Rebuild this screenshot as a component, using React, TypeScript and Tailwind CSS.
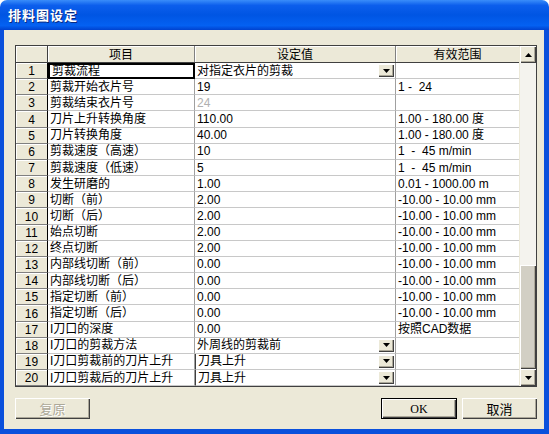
import React from 'react';

type Row = {
  name: string;
  value: string;
  range: string;
  drop?: boolean;
  dim?: boolean;
};

const rows: Row[] = [
  { name: '剪裁流程', value: '对指定衣片的剪裁', range: '', drop: true },
  { name: '剪裁开始衣片号', value: '19', range: '1 -  24' },
  { name: '剪裁结束衣片号', value: '24', range: '', dim: true },
  { name: '刀片上升转换角度', value: '110.00', range: '1.00 - 180.00 度' },
  { name: '刀片转换角度', value: '40.00', range: '1.00 - 180.00 度' },
  { name: '剪裁速度（高速）', value: '10', range: '1  -  45 m/min' },
  { name: '剪裁速度（低速）', value: '5', range: '1  -  45 m/min' },
  { name: '发生研磨的', value: '1.00', range: '0.01 - 1000.00 m' },
  { name: '切断（前）', value: '2.00', range: '-10.00 - 10.00 mm' },
  { name: '切断（后）', value: '2.00', range: '-10.00 - 10.00 mm' },
  { name: '始点切断', value: '2.00', range: '-10.00 - 10.00 mm' },
  { name: '终点切断', value: '2.00', range: '-10.00 - 10.00 mm' },
  { name: '内部线切断（前）', value: '0.00', range: '-10.00 - 10.00 mm' },
  { name: '内部线切断（后）', value: '0.00', range: '-10.00 - 10.00 mm' },
  { name: '指定切断（前）', value: '0.00', range: '-10.00 - 10.00 mm' },
  { name: '指定切断（后）', value: '0.00', range: '-10.00 - 10.00 mm' },
  { name: 'I刀口的深度', value: '0.00', range: '按照CAD数据' },
  { name: 'I刀口的剪裁方法', value: '外周线的剪裁前', range: '', drop: true },
  { name: 'I刀口剪裁前的刀片上升', value: '刀具上升', range: '', drop: true },
  { name: 'I刀口剪裁后的刀片上升', value: '刀具上升', range: '', drop: true },
];

const raised =
  'bg-[#ECE9D8] shadow-[inset_1px_1px_0_#ffffff,inset_-1px_-1px_0_#404040,inset_-2px_-2px_0_#ACA899]';

function Arrow({ up }: { up?: boolean }) {
  return (
    <svg width="7" height="4" viewBox="0 0 7 4">
      <path d={up ? 'M3.5 0 L7 4 L0 4 Z' : 'M0 0 L7 0 L3.5 4 Z'} fill="#000" />
    </svg>
  );
}

function DropButton() {
  return (
    <div className={`ml-auto mr-[1px] flex h-[13px] w-[16px] shrink-0 items-center justify-center ${raised}`}>
      <Arrow />
    </div>
  );
}

export default function App() {
  return (
    <div className="h-[434px] w-[549px] bg-white font-['Liberation_Sans','Noto_Sans_CJK_SC',sans-serif] text-[12px] text-black">
      <div className="flex h-full flex-col overflow-hidden rounded-t-[7px]">
        <div className="flex h-[30px] shrink-0 items-center bg-[linear-gradient(to_bottom,#3A8DFA_0%,#0C5EEC_18%,#0055E3_50%,#0461F2_85%,#0042CF_100%)] pl-[8px]">
          <span className="text-[13px] font-bold tracking-[1px] text-white [text-shadow:1px_1px_0_#0A2A80] font-['Noto_Sans_CJK_SC',sans-serif]">
            排料图设定
          </span>
        </div>

        <div className="flex flex-1 flex-col border-b-[5px] border-l-[4px] border-r-[5px] border-[#0A50DC] bg-[#ECE9D8] pl-[11px] pt-[15px]">
          <div className="flex w-[522px] border border-[#404040]">
            <div className="flex w-[503px] flex-col">
              <div className="flex h-[17px] border-b border-[#404040]">
                <div className="w-[32px] border-r border-[#404040] bg-[#ECE9D8] shadow-[inset_1px_1px_0_#ffffff]" />
                <div className="flex w-[147px] items-center justify-center border-r border-[#808080] bg-[#ECE9D8] shadow-[inset_1px_1px_0_#ffffff] font-['Noto_Sans_CJK_SC',sans-serif]">
                  项目
                </div>
                <div className="flex w-[201px] items-center justify-center border-r border-[#808080] bg-[#ECE9D8] shadow-[inset_1px_1px_0_#ffffff] font-['Noto_Sans_CJK_SC',sans-serif]">
                  设定值
                </div>
                <div className="flex flex-1 items-center justify-center bg-[#ECE9D8] shadow-[inset_1px_1px_0_#ffffff] font-['Noto_Sans_CJK_SC',sans-serif]">
                  有效范围
                </div>
              </div>
              <div className="flex h-[323px] flex-col">
                {rows.map((r, i) => (
                  <div key={i} className="flex min-h-0 flex-1">
                    <div className="flex w-[32px] items-end justify-center border-b border-r border-b-[#808080] border-r-[#000] bg-[#ECE9D8] leading-[14px] shadow-[inset_1px_1px_0_#ffffff]">
                      {i + 1}
                    </div>
                    <div
                      className={`flex w-[147px] items-center overflow-hidden whitespace-nowrap bg-white pl-[2px] ${
                        i === 0
                          ? 'border-2 border-black'
                          : 'border-b border-r border-b-[#C8C8C8] border-r-[#A0A0A0]'
                      }`}
                    >
                      {r.name}
                    </div>
                    <div
                      className={`flex w-[201px] items-center overflow-hidden whitespace-pre border-b border-r border-b-[#C8C8C8] border-r-[#A0A0A0] bg-white pl-[2px] ${
                        r.dim ? 'text-[#B0B0B0]' : ''
                      } ${i >= 18 ? 'border-l border-l-[#404040]' : ''}`}
                    >
                      <span>{r.value}</span>
                      {r.drop && <DropButton />}
                    </div>
                    <div className="flex flex-1 items-center overflow-hidden whitespace-pre border-b border-b-[#C8C8C8] bg-white pl-[2px]">
                      {r.range}
                    </div>
                  </div>
                ))}
              </div>
            </div>

            <div className="flex w-[17px] flex-col border-l border-[#ECE9D8]">
              <div className={`flex h-[17px] items-center justify-center ${raised}`}>
                <Arrow up />
              </div>
              <div className="h-[202px] bg-[#F4F3EE]" />
              <div className="flex-1 bg-[#D2CFC4] shadow-[inset_1px_1px_0_#ffffff,inset_-1px_-1px_0_#404040,inset_-2px_-2px_0_#ACA899]" />
              <div className={`flex h-[17px] items-center justify-center ${raised}`}>
                <Arrow />
              </div>
            </div>
          </div>

          <div className="mt-[11px] flex h-[21px] w-[522px] items-stretch">
            <div className={`flex w-[75px] items-center justify-center text-[13px] text-[#ACA899] [text-shadow:1px_1px_0_#ffffff] font-['Noto_Sans_CJK_SC',sans-serif] ${raised}`}>
              复原
            </div>
            <div className="ml-auto flex w-[76px] items-center justify-center border border-black bg-[#ECE9D8] shadow-[inset_1px_1px_0_#ffffff,inset_-1px_-1px_0_#404040,inset_-2px_-2px_0_#ACA899] font-['Liberation_Serif',serif] text-[12px]">
              OK
            </div>
            <div className={`ml-[5px] flex w-[75px] items-center justify-center text-[13px] font-['Noto_Sans_CJK_SC',sans-serif] ${raised}`}>
              取消
            </div>
          </div>
        </div>
      </div>
    </div>
  );
}
